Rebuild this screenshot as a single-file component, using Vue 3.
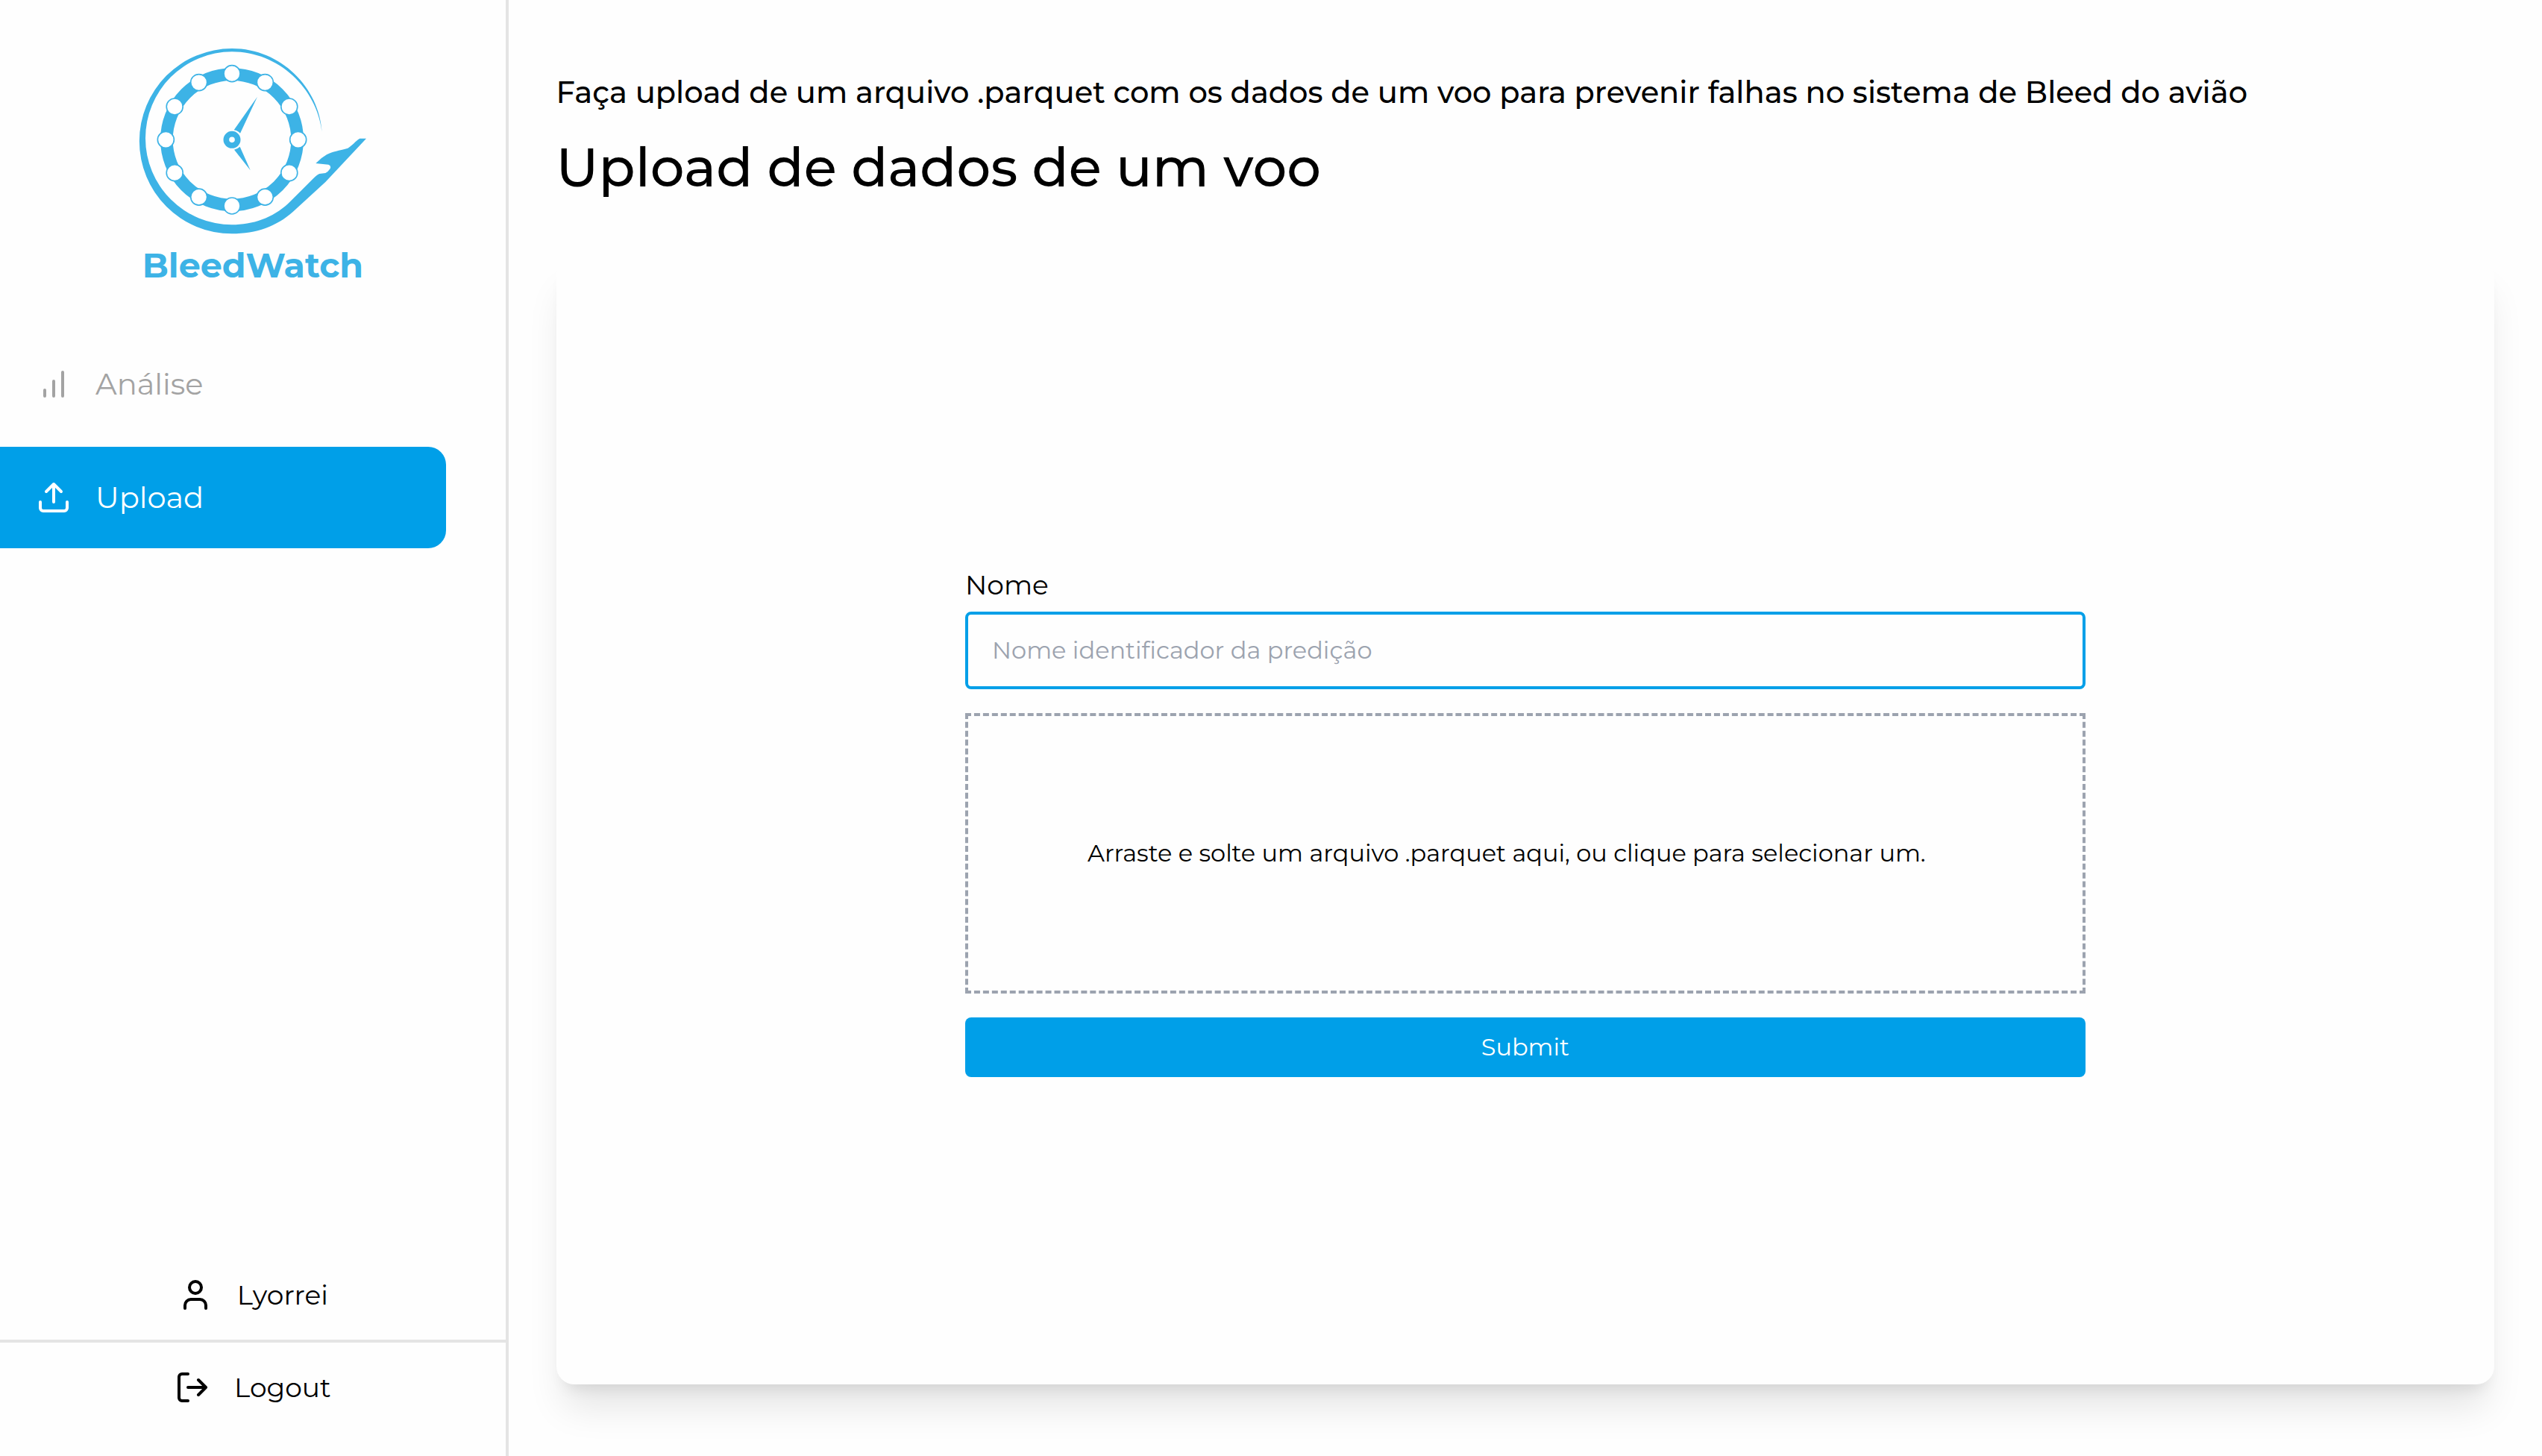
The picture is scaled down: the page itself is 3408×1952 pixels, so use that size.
<script setup>
import { ref } from 'vue'

const nome = ref('')
const navItems = [
  { id: 'analise', label: 'Análise', active: false },
  { id: 'upload', label: 'Upload', active: true },
]
// Hour markers around the dial of the logo, one every 30 degrees
const markers = Array.from({ length: 12 }, (_, i) => {
  const angle = (i * Math.PI) / 6
  return { x: 452 + 266 * Math.sin(angle), y: 442 - 266 * Math.cos(angle) }
})
</script>

<template>
  <div class="layout">
    <aside class="sidebar">
      <div class="logo">
        <svg class="logo-mark" viewBox="-4 0 1080 840" aria-hidden="true">
          <path
            fill="#3db3e6"
            d="M814 410C803 235 651 75 452 75A372 372 0 0 0 452 820C550 820 632 790 697 732L828 612L992 437H966C945 450 940 462 918 476C880 487 860 488 833 502Q810 515 789 537L840 542Q852 546 847 558Q838 572 828 576L804 579Q795 582 780 597L680 697C615 758 535 784 452 784A348 348 0 0 1 452 88C640 88 793 235 814 410Z"
          />
          <circle cx="452" cy="442" r="263" fill="none" stroke="#3db3e6" stroke-width="50" />
          <circle
            v-for="(m, i) in markers"
            :key="i"
            :cx="m.x"
            :cy="m.y"
            r="33"
            fill="#fff"
            stroke="#3db3e6"
            stroke-width="5"
          />
          <path fill="#3db3e6" d="M554 269L460 403Q475 405 485 416ZM526 565L461 482Q474 479 484 470Z" />
          <circle cx="452" cy="442" r="23" fill="none" stroke="#3db3e6" stroke-width="23" />
        </svg>
        <span class="logo-name">BleedWatch</span>
      </div>

      <nav class="nav">
        <a
          v-for="item in navItems"
          :key="item.id"
          href="#"
          class="nav-item"
          :class="{ active: item.active }"
        >
          <svg class="icon" viewBox="0 0 24 24" aria-hidden="true">
            <path v-if="item.id === 'analise'" d="M12 20V10M18 20V4M6 20v-4" />
            <path v-else d="M21 15v4a2 2 0 0 1-2 2H5a2 2 0 0 1-2-2v-4M17 8l-5-5-5 5M12 3v12" />
          </svg>
          {{ item.label }}
        </a>
      </nav>

      <div class="account">
        <a href="#" class="account-item user">
          <svg class="icon" viewBox="0 0 24 24" aria-hidden="true">
            <path d="M19 21v-2a4 4 0 0 0-4-4H9a4 4 0 0 0-4 4v2" />
            <circle cx="12" cy="7" r="4" />
          </svg>
          Lyorrei
        </a>
        <button type="button" class="account-item">
          <svg class="icon" viewBox="0 0 24 24" aria-hidden="true">
            <path d="M9 21H5a2 2 0 0 1-2-2V5a2 2 0 0 1 2-2h4M16 17l5-5-5-5M21 12H9" />
          </svg>
          Logout
        </button>
      </div>
    </aside>

    <main class="main">
      <header class="header">
        <p class="subtitle">
          Faça upload de um arquivo .parquet com os dados de um voo para prevenir falhas no sistema de Bleed do avião
        </p>
        <h1 class="title">Upload de dados de um voo</h1>
      </header>

      <section class="card">
        <form class="form" @submit.prevent>
          <div class="field">
            <label for="nome">Nome</label>
            <input id="nome" v-model="nome" type="text" placeholder="Nome identificador da predição" />
          </div>
          <button type="button" class="dropzone">
            Arraste e solte um arquivo .parquet aqui, ou clique para selecionar um.
          </button>
          <button type="submit" class="submit">Submit</button>
        </form>
      </section>
    </main>
  </div>
</template>

<style>
body {
  margin: 0;
  background: #fefefe;
}
</style>

<style scoped>
.layout,
.layout * {
  box-sizing: border-box;
}
.layout {
  display: flex;
  min-height: 100vh;
  color: #000;
  font-family: Montserrat, Inter, sans-serif;
}
button,
input {
  font-family: inherit;
  color: inherit;
}
a {
  color: inherit;
  text-decoration: none;
}
.sidebar {
  flex: none;
  display: flex;
  flex-direction: column;
  width: 20%;
  padding: 40px 0 32px;
  border-right: 4px solid #e4e4e4;
}
.logo {
  display: flex;
  flex-direction: column;
  align-items: center;
  margin-bottom: 63px;
}
.logo-mark {
  width: 360px;
  height: 280px;
}
.logo-name {
  margin-top: 8px;
  font-size: 46px;
  line-height: 56px;
  font-weight: 700;
  color: #3db3e6;
}
.icon {
  flex: none;
  width: 48px;
  height: 48px;
  fill: none;
  stroke: currentColor;
  stroke-width: 2;
  stroke-linecap: round;
  stroke-linejoin: round;
}
.nav {
  display: flex;
  flex-direction: column;
  gap: 16px;
  padding-right: 80px;
}
.nav-item {
  display: flex;
  align-items: center;
  gap: 32px;
  padding: 40px 48px;
  border-radius: 0 24px 24px 0;
  font-size: 40px;
  line-height: 56px;
  color: #a3a3a3;
}
.nav-item.active {
  background: #009fe8;
  color: #fff;
}
.account {
  margin-top: auto;
}
.account-item {
  display: flex;
  align-items: center;
  justify-content: center;
  gap: 32px;
  width: 100%;
  padding: 32px;
  border: 0;
  background: none;
  font-size: 36px;
  line-height: 56px;
}
.account-item.user {
  border-bottom: 4px solid #e4e4e4;
}
.main {
  flex: 1;
  display: flex;
  flex-direction: column;
  gap: 80px;
  min-width: 0;
  padding: 96px 64px;
}
.header {
  display: flex;
  flex-direction: column;
  gap: 32px;
}
.subtitle {
  margin: 0;
  font-size: 40px;
  line-height: 56px;
  font-weight: 500;
}
.title {
  margin: 0;
  font-size: 72px;
  line-height: 80px;
  font-weight: 500;
}
.card {
  flex: 1;
  display: flex;
  align-items: center;
  justify-content: center;
  padding: 48px;
  border-radius: 24px;
  background: #fefefe;
  box-shadow:
    0 40px 50px -10px rgba(0, 0, 0, 0.1),
    0 16px 20px -12px rgba(0, 0, 0, 0.1);
}
.form {
  display: flex;
  flex-direction: column;
  gap: 32px;
  width: 60%;
}
.field {
  display: flex;
  flex-direction: column;
  gap: 8px;
}
.field label {
  font-size: 36px;
  line-height: 56px;
}
.field input {
  width: 100%;
  padding: 24px 32px;
  border: 4px solid #009fe8;
  border-radius: 8px;
  background: transparent;
  font-size: 32px;
  line-height: 48px;
}
.field input::placeholder {
  color: #9ca3af;
  opacity: 1;
}
.dropzone {
  padding: 160px;
  border: 4px dashed #9ca3af;
  background: none;
  font-size: 32px;
  line-height: 48px;
  text-align: left;
}
.submit {
  padding: 16px;
  border: 0;
  border-radius: 8px;
  background: #009fe8;
  color: #fff;
  font-size: 32px;
  line-height: 48px;
}
</style>
